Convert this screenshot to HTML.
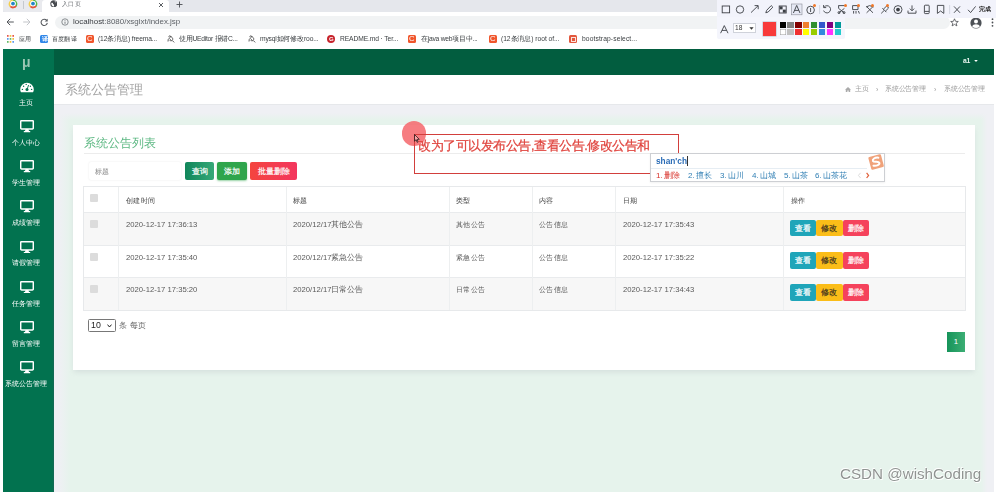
<!DOCTYPE html>
<html lang="zh">
<head>
<meta charset="utf-8">
<title>入口页</title>
<style>
*{box-sizing:border-box;margin:0;padding:0}
html,body{width:996px;height:492px;overflow:hidden;background:#fff}
body{position:relative;font-family:"Liberation Sans",sans-serif;color:#555;font-size:7.7px}
.abs{position:absolute}
.t{position:absolute;white-space:nowrap;line-height:1;will-change:transform}
/* ---------- browser chrome ---------- */
#tabstrip{left:0;top:0;width:996px;height:12px;background:#e5e7ec}
#pinned{left:3px;top:0;width:39px;height:12px;background:#e9eaee;border-radius:0 0 3px 3px}
#acttab{left:42px;top:0;width:127px;height:13px;background:#fff;border-radius:3px 3px 0 0}
#omni{left:55px;top:15.5px;width:895px;height:13px;background:#f1f3f4;border-radius:7px}
.bm{font-size:6.7px;color:#3c4043;top:35.5px}
.ico{position:absolute;top:35px;width:8px;height:8px;border-radius:1.5px}
/* ---------- app ---------- */
#topbar{left:3px;top:49px;width:991px;height:26px;background:#025d3f}
#sidebar{left:3px;top:49px;width:51px;height:443px;background:#02724f}
#header{left:54px;top:75px;width:940px;height:29px;background:#fff}
#content{left:54px;top:104px;width:940px;height:388px;overflow:hidden;border-top:1px solid #e6e8eb;background:linear-gradient(to right,#eff0f4 5px,rgba(239,240,244,0) 16px),linear-gradient(to left,#eff0f4 7px,rgba(239,240,244,0) 13px),linear-gradient(to bottom,#eff0f4 8px,rgba(239,240,244,0) 15px),#e6f3ec}
#inner{display:none}
#panel{left:73px;top:125px;width:902px;height:244.5px;background:#fff;box-shadow:0 3px 5px -1px rgba(150,155,170,.22)}
.side-l{font-size:7.1px;color:#fff;width:54px;left:-0.6px;text-align:center}
.mon{position:absolute;left:19.5px;width:14px;height:12.5px}
/* table */
#tbl{left:83px;top:185.9px;width:882.7px;height:125px;border:1px solid #e7e9eb;background:#fff}
.row{position:absolute;left:0;width:880.7px}
.vl{position:absolute;top:0;width:1px;height:123px;background:#edeff0}
.hl{position:absolute;left:0;width:880.7px;height:1px;background:#e9ebed}
.cb{position:absolute;left:90.1px;width:7.9px;height:8.4px;background:#dcdcdc;border-radius:1px}
.c{color:#5a5a5a;font-size:7.7px}
.h{color:#444;font-size:7.2px}
.btn{position:absolute;color:#fff;text-align:center;border-radius:2px;font-size:8px;padding-top:1px;-webkit-text-stroke:0.2px #fff}
.ab{position:absolute;width:26.3px;height:16.6px;line-height:17.8px;text-align:center;font-size:8px;border-radius:2px;overflow:hidden}
</style>
</head>
<body>
<!-- ================= browser chrome ================= -->
<div class="abs" id="tabstrip"></div>
<div class="abs" id="pinned"></div>
<div class="abs" style="left:0;top:0;width:3px;height:492px;background:#fff"></div>
<div class="abs" id="acttab"></div>
<div class="abs" id="omni"></div>


<!-- pinned tab icons -->
<svg class="abs" style="left:7.8px;top:-1.2px" width="10" height="10" viewBox="0 0 10 10"><path d="M5 5 L5 0.6 A4.4 4.4 0 0 0 2 8.2 Z" fill="#f5cf4c"/><path d="M5 5 L5 0.6 A4.4 4.4 0 0 1 8.6 7.4 Z" fill="#58b848"/><path d="M5 5 L8.8 7.2 A4.4 4.4 0 0 1 1.8 8 Z" fill="#e2553a"/><circle cx="5" cy="4.6" r="2.9" fill="#fff"/><circle cx="5" cy="4.6" r="1.9" fill="#2486c9"/></svg>
<div class="abs" style="left:23px;top:1px;width:1px;height:8px;background:#c6c9ce"></div>
<svg class="abs" style="left:27.6px;top:-1.2px" width="10" height="10" viewBox="0 0 10 10"><path d="M5 5 L5 0.6 A4.4 4.4 0 0 0 2 8.2 Z" fill="#f5cf4c"/><path d="M5 5 L5 0.6 A4.4 4.4 0 0 1 8.6 7.4 Z" fill="#58b848"/><path d="M5 5 L8.8 7.2 A4.4 4.4 0 0 1 1.8 8 Z" fill="#e2553a"/><circle cx="5" cy="4.6" r="2.9" fill="#fff"/><circle cx="5" cy="4.6" r="1.9" fill="#2486c9"/></svg>
<!-- active tab content -->
<svg class="abs" style="left:49.7px;top:-0.3px" width="7.6" height="7.6" viewBox="0 0 8 8"><circle cx="4" cy="4" r="3.7" fill="#484b50"/><path d="M1.4 3.2 C2.4 2.6 3.2 3 3.1 3.8 C3 4.6 4.2 4.6 4.3 5.4 C4.4 6.2 3.8 6.6 3.4 7 C2.2 6.6 1.2 5 1.4 3.2 Z" fill="#fff"/><path d="M4.8 1 C5.3 1.6 5.2 2.2 5.8 2.5 C6.3 2.7 6.8 2.5 7 3 C6.7 2 5.8 1.2 4.8 1 Z" fill="#fff"/></svg>
<div class="t" style="left:61.5px;top:1.2px;font-size:6.4px;color:#6a6d72;letter-spacing:0.266px">入口页</div>
<svg class="abs" style="left:157.5px;top:1.5px" width="6" height="6" viewBox="0 0 6 6"><path d="M1 1 L5 5 M5 1 L1 5" stroke="#4a4d52" stroke-width="0.9" fill="none"/></svg>
<svg class="abs" style="left:176px;top:0.5px" width="7" height="7" viewBox="0 0 7 7"><path d="M3.5 0.5 V6.5 M0.5 3.5 H6.5" stroke="#4a4d52" stroke-width="0.9" fill="none"/></svg>
<!-- nav buttons -->
<svg class="abs" style="left:6.2px;top:18px" width="8" height="8" viewBox="0 0 8 8"><path d="M7.8 4 H1 M4.2 0.8 L1 4 L4.2 7.2" stroke="#55585d" stroke-width="1" fill="none"/></svg>
<svg class="abs" style="left:22.5px;top:18px" width="8" height="8" viewBox="0 0 8 8"><path d="M0.2 4 H7 M3.8 0.8 L7 4 L3.8 7.2" stroke="#c3c5c9" stroke-width="1" fill="none"/></svg>
<svg class="abs" style="left:39.8px;top:17.8px" width="8.4" height="8.4" viewBox="0 0 8 8"><path d="M6.3 2.1 A3 3 0 1 0 7 4.7" stroke="#55585d" stroke-width="1" fill="none"/><path d="M7.3 0.6 V3.4 H4.5 Z" fill="#55585d"/></svg>
<svg class="abs" style="left:60.5px;top:18px" width="8" height="8" viewBox="0 0 8 8"><circle cx="4" cy="4" r="3.2" stroke="#5f6368" stroke-width="0.7" fill="none"/><path d="M4 3.6 V5.8 M4 2.2 V2.9" stroke="#5f6368" stroke-width="0.8"/></svg>
<div class="t" style="left:73.3px;top:18.2px;font-size:7.95px;color:#5f6368"><span style="color:#3a3d42">localhost</span>:8080/xsglxt/index.jsp</div>
<!-- bookmarks bar -->
<svg class="abs" style="left:7px;top:35px" width="7" height="8" viewBox="0 0 7 8"><g><rect x="0" y="0" width="1.6" height="1.8" fill="#e8574a"/><rect x="2.7" y="0" width="1.6" height="1.8" fill="#f2c13c"/><rect x="5.4" y="0" width="1.6" height="1.8" fill="#e8574a"/><rect x="0" y="3" width="1.6" height="1.8" fill="#5b9bf0"/><rect x="2.7" y="3" width="1.6" height="1.8" fill="#62b866"/><rect x="5.4" y="3" width="1.6" height="1.8" fill="#f2c13c"/><rect x="0" y="6" width="1.6" height="1.8" fill="#62b866"/><rect x="2.7" y="6" width="1.6" height="1.8" fill="#f2c13c"/><rect x="5.4" y="6" width="1.6" height="1.8" fill="#5b9bf0"/></g></svg>
<div class="t bm" style="left:18.8px;font-size:6.4px;letter-spacing:-0.051px">应用</div>
<div class="ico" style="left:40px;background:#2f86e8"></div><div class="t" style="left:41.8px;top:35.8px;font-size:6px;color:#fff;font-weight:bold">译</div>
<div class="t bm" style="left:52px;font-size:6.4px;letter-spacing:0.199px">百度翻译</div>
<div class="ico" style="left:86px;background:#f0562c"></div><div class="t" style="left:87.3px;top:35.2px;font-size:7.6px;color:#fff">C</div>
<div class="t bm" style="left:97.9px;letter-spacing:-0.126px">(12条消息) freema...</div>
<svg class="abs" style="left:167px;top:35px" width="8" height="8" viewBox="0 0 8 8"><path d="M1 6.5 C0.5 3 4 3 3.6 1.4 C3.2 0.2 1.4 1 2 2.2 M3.6 1.4 C6 2.4 6.6 5 4.2 5.8 C2.6 6.2 2.6 4.4 3.8 4.4 M5.2 5.4 L7.2 7.4" stroke="#333" stroke-width="0.8" fill="none"/></svg>
<div class="t bm" style="left:178.7px;letter-spacing:-0.254px">使用UEditor 报错C...</div>
<svg class="abs" style="left:247.5px;top:35px" width="8" height="8" viewBox="0 0 8 8"><path d="M1 6.5 C0.5 3 4 3 3.6 1.4 C3.2 0.2 1.4 1 2 2.2 M3.6 1.4 C6 2.4 6.6 5 4.2 5.8 C2.6 6.2 2.6 4.4 3.8 4.4 M5.2 5.4 L7.2 7.4" stroke="#333" stroke-width="0.8" fill="none"/></svg>
<div class="t bm" style="left:259.5px;letter-spacing:-0.161px">mysql如何修改roo...</div>
<div class="ico" style="left:327.3px;background:#c7232b;border-radius:4px"></div><div class="t" style="left:328.9px;top:36.2px;font-size:6px;color:#fff;font-weight:bold">G</div>
<div class="t bm" style="left:339.9px;letter-spacing:-0.104px">README.md · Ter...</div>
<div class="ico" style="left:408.1px;background:#f0562c"></div><div class="t" style="left:409.4px;top:35.2px;font-size:7.6px;color:#fff">C</div>
<div class="t bm" style="left:420.7px;letter-spacing:-0.232px">在java web项目中...</div>
<div class="ico" style="left:488.5px;background:#f0562c"></div><div class="t" style="left:489.8px;top:35.2px;font-size:7.6px;color:#fff">C</div>
<div class="t bm" style="left:501.3px;letter-spacing:-0.049px">(12条消息) root of...</div>
<div class="ico" style="left:569px;background:#e2573d"></div><div class="abs" style="left:570.5px;top:36.5px;width:5px;height:5px;border:0.8px solid #fbe3dc"></div>
<div class="t bm" style="left:581.6px;letter-spacing:0.108px">bootstrap-select...</div>
<!-- right side chrome icons -->
<svg class="abs" style="left:950px;top:18px" width="9" height="9" viewBox="0 0 9 9"><path d="M4.5 0.8 L5.6 3.3 L8.3 3.5 L6.2 5.2 L6.9 7.9 L4.5 6.4 L2.1 7.9 L2.8 5.2 L0.7 3.5 L3.4 3.3 Z" stroke="#4a4d52" stroke-width="0.8" fill="none"/></svg>
<svg class="abs" style="left:969.5px;top:16.5px" width="12" height="12" viewBox="0 0 12 12"><circle cx="6" cy="6" r="5.6" fill="#4d5156"/><circle cx="6" cy="4.4" r="2" fill="#fff"/><path d="M2.2 9.4 C2.8 6.6 9.2 6.6 9.8 9.4 A5.4 5.4 0 0 1 2.2 9.4 Z" fill="#fff"/></svg>
<svg class="abs" style="left:990.5px;top:18px" width="3" height="9" viewBox="0 0 3 9"><circle cx="1.5" cy="1.2" r="0.9" fill="#4a4d52"/><circle cx="1.5" cy="4.5" r="0.9" fill="#4a4d52"/><circle cx="1.5" cy="7.8" r="0.9" fill="#4a4d52"/></svg>


<!-- screenshot toolbar -->
<div class="abs" style="left:716.5px;top:0;width:280px;height:17.5px;background:#f2f3fb"></div>
<div class="abs" style="left:716.5px;top:17px;width:128px;height:21.5px;background:#f4f5fc;border-radius:0 0 2px 2px"></div>
<svg class="abs" style="left:716px;top:0" width="280" height="18" viewBox="0 0 280 18">
 <rect x="6.2" y="6" width="7.4" height="6.8" stroke="#3c3f45" stroke-width="0.9" fill="none"/>
 <circle cx="24" cy="9.5" r="3.7" stroke="#3c3f45" stroke-width="0.9" fill="none"/>
 <path d="M35 12.6 L42 5.8 M38.6 5.6 H42.2 V9.2" stroke="#3c3f45" stroke-width="0.9" fill="none"/>
 <path d="M49.8 12.8 L50.6 10.4 L55.2 5.6 L56.8 7.2 L52.2 12 Z" stroke="#3c3f45" stroke-width="0.9" fill="none"/>
 <rect x="63.2" y="6" width="7" height="7" stroke="#3c3f45" stroke-width="0.9" fill="none"/><rect x="63.6" y="6.4" width="3" height="3" fill="#3c3f45"/><rect x="66.8" y="9.6" width="3" height="3" fill="#3c3f45"/>
 <rect x="75.4" y="4" width="10.6" height="10.8" fill="#e6e8f4" stroke="#8a8d96" stroke-width="0.6"/>
 <path d="M77.4 13 L80.7 5.4 L84 13 M78.6 10.4 H82.8" stroke="#3c3f45" stroke-width="0.9" fill="none"/>
 <circle cx="94.6" cy="10" r="3.8" stroke="#3c3f45" stroke-width="0.9" fill="none"/><path d="M94.6 8 V12" stroke="#3c3f45" stroke-width="0.9" fill="none"/>
 <path d="M103.6 5 V14" stroke="#c9cbd6" stroke-width="0.7"/>
 <path d="M108.2 7 A3.6 3.6 0 1 1 107.6 10.6 M107.6 5 V7.6 H110.2" stroke="#3c3f45" stroke-width="0.9" fill="none"/>
 <path d="M122.4 5.6 H128.6 M122.6 5.6 V8.4 M128.4 8.4 L122.6 13 M122.6 8.4 L128.4 13" stroke="#3c3f45" stroke-width="0.9" fill="none"/><circle cx="123" cy="12.6" r="1" stroke="#3c3f45" stroke-width="0.9" fill="none"/><circle cx="128" cy="12.6" r="1" stroke="#3c3f45" stroke-width="0.9" fill="none"/>
 <path d="M136.6 5.6 H142 V9.6 H136.6 Z M137.6 11 V13.6 M140 11 V13.6 M142.4 11 L143.4 13.6" stroke="#3c3f45" stroke-width="0.9" fill="none"/>
 <path d="M150.6 6.6 L157 12.8 M157 6.6 L150.6 12.8 M150 7 L153.6 5.6 L157.6 7" stroke="#3c3f45" stroke-width="0.9" fill="none"/>
 <path d="M165.2 13.4 L168 10.6 M166.4 8.2 L170.4 12.2 M167.4 9.2 L170.6 6 L172.6 8 L169.4 11.2" stroke="#3c3f45" stroke-width="0.9" fill="none"/>
 <circle cx="182" cy="9.6" r="4" stroke="#3c3f45" stroke-width="0.9" fill="none"/><circle cx="182" cy="9.6" r="1.9" fill="#3c3f45"/>
 <path d="M196 5.4 V10.6 M193.8 8.6 L196 10.8 L198.2 8.6 M192 10.6 V13.2 H200 V10.6" stroke="#3c3f45" stroke-width="0.9" fill="none"/>
 <rect x="208.4" y="5.2" width="4.8" height="8.4" rx="0.8" stroke="#3c3f45" stroke-width="0.9" fill="none"/><path d="M208.4 11.4 H213.2" stroke="#3c3f45" stroke-width="0.9" fill="none"/>
 <path d="M221.4 5.4 H227.8 V13.4 L224.6 11 L221.4 13.4 Z" stroke="#3c3f45" stroke-width="0.9" fill="none"/>
 <path d="M233.6 5 V14" stroke="#c9cbd6" stroke-width="0.7"/>
 <path d="M238 6.4 L244 12.8 M244 6.4 L238 12.8" stroke="#3c3f45" stroke-width="0.9" fill="none"/>
 <path d="M252 9.8 L254.6 12.6 L259.6 6.4" stroke="#3c3f45" stroke-width="0.9" fill="none"/>
</svg>
<div class="abs" style="left:812.5px;top:3.5px;width:3px;height:3px;border-radius:2px;background:#f0782a"></div><div class="abs" style="left:843.5px;top:3.5px;width:3px;height:3px;border-radius:2px;background:#f0782a"></div><div class="abs" style="left:857px;top:3.5px;width:3px;height:3px;border-radius:2px;background:#f0782a"></div><div class="abs" style="left:871px;top:3.5px;width:3px;height:3px;border-radius:2px;background:#f0782a"></div><div class="abs" style="left:886px;top:3.5px;width:3px;height:3px;border-radius:2px;background:#f0782a"></div>
<div class="t" style="left:978.5px;top:6.4px;font-size:6.4px;color:#222;font-weight:bold;letter-spacing:0.196px">完成</div>
<svg class="abs" style="left:720px;top:24.5px" width="9" height="9" viewBox="0 0 9 9"><path d="M0.6 8.2 L4.3 0.6 L8 8.2 M2 5.4 H6.6" stroke="#3c3f45" stroke-width="0.9" fill="none"/></svg>
<div class="abs" style="left:732.5px;top:23.3px;width:23.5px;height:10px;background:#fff;border:0.6px solid #cfd2da"></div>
<div class="t" style="left:735px;top:25.2px;font-size:6.6px;color:#333">18</div>
<svg class="abs" style="left:748.5px;top:27px" width="5" height="3" viewBox="0 0 5 3"><path d="M0.4 0.3 H4.6 L2.5 2.8 Z" fill="#333"/></svg>
<div class="abs" style="left:763.3px;top:21.6px;width:13.2px;height:14px;background:#f83a3a;box-shadow:0 0 0 0.5px #b9bcc6"></div>
<div class="abs" style="left:779.60px;top:21.8px;width:6.3px;height:5.8px;background:#000000"></div><div class="abs" style="left:787.45px;top:21.8px;width:6.3px;height:5.8px;background:#808080"></div><div class="abs" style="left:795.30px;top:21.8px;width:6.3px;height:5.8px;background:#800000"></div><div class="abs" style="left:803.15px;top:21.8px;width:6.3px;height:5.8px;background:#f08030"></div><div class="abs" style="left:811.00px;top:21.8px;width:6.3px;height:5.8px;background:#2f8f2f"></div><div class="abs" style="left:818.85px;top:21.8px;width:6.3px;height:5.8px;background:#3355cc"></div><div class="abs" style="left:826.70px;top:21.8px;width:6.3px;height:5.8px;background:#800080"></div><div class="abs" style="left:834.55px;top:21.8px;width:6.3px;height:5.8px;background:#009999"></div><div class="abs" style="left:779.60px;top:29.4px;width:6.3px;height:6px;background:#ffffff;box-shadow:inset 0 0 0 0.5px #999"></div><div class="abs" style="left:787.45px;top:29.4px;width:6.3px;height:6px;background:#c0c0c0"></div><div class="abs" style="left:795.30px;top:29.4px;width:6.3px;height:6px;background:#f03030"></div><div class="abs" style="left:803.15px;top:29.4px;width:6.3px;height:6px;background:#ffff00"></div><div class="abs" style="left:811.00px;top:29.4px;width:6.3px;height:6px;background:#99cc00"></div><div class="abs" style="left:818.85px;top:29.4px;width:6.3px;height:6px;background:#3388dd"></div><div class="abs" style="left:826.70px;top:29.4px;width:6.3px;height:6px;background:#ff33ff"></div><div class="abs" style="left:834.55px;top:29.4px;width:6.3px;height:6px;background:#22cccc"></div>

<!-- ================= app ================= -->
<div class="abs" id="topbar"></div>
<div class="abs" id="sidebar"></div>
<div class="abs" style="left:52px;top:75px;width:2px;height:417px;background:linear-gradient(to right,rgba(40,90,90,0),rgba(50,90,95,.45))"></div>
<div class="abs" id="header"></div>
<div class="abs" id="content"><div class="abs" id="inner"></div></div>
<div class="abs" id="panel"></div>
<!-- sidebar/topbar/header content -->
<div class="t" style="left:21.6px;top:54.6px;font-size:14px;font-weight:bold;color:#9cc7b4">μ</div>
<svg class="abs" style="left:19.5px;top:81px" width="14" height="11.5" viewBox="0 0 14 11.5"><path d="M0.2 8.6 A6.8 6.8 0 0 1 13.8 8.6 Q13.8 10.2 13 11.3 H1 Q0.2 10.2 0.2 8.6 Z" fill="#fff"/><circle cx="7" cy="8.6" r="1.5" fill="#02724f"/><path d="M7 8.6 L8.6 4" stroke="#02724f" stroke-width="0.9"/><circle cx="2.4" cy="8.4" r="0.7" fill="#02724f"/><circle cx="3.6" cy="5.2" r="0.7" fill="#02724f"/><circle cx="6.2" cy="3.4" r="0.7" fill="#02724f"/><circle cx="10.4" cy="5.2" r="0.7" fill="#02724f"/><circle cx="11.6" cy="8.4" r="0.7" fill="#02724f"/></svg>
<div class="t side-l" style="top:99.5px">主页</div>
<div class="t side-l" style="top:139.7px">个人中心</div>
<svg class="mon" style="top:120.0px" viewBox="0 0 14 12.5"><rect x="0.7" y="0.7" width="12.6" height="8.2" rx="0.9" fill="none" stroke="#fff" stroke-width="1.5"/><path d="M5.6 9 L5 11 H3.8 V12.2 H10.2 V11 H9 L8.4 9 Z" fill="#fff"/></svg>
<div class="t side-l" style="top:179.9px">学生管理</div>
<svg class="mon" style="top:160.2px" viewBox="0 0 14 12.5"><rect x="0.7" y="0.7" width="12.6" height="8.2" rx="0.9" fill="none" stroke="#fff" stroke-width="1.5"/><path d="M5.6 9 L5 11 H3.8 V12.2 H10.2 V11 H9 L8.4 9 Z" fill="#fff"/></svg>
<div class="t side-l" style="top:220.1px">成绩管理</div>
<svg class="mon" style="top:200.4px" viewBox="0 0 14 12.5"><rect x="0.7" y="0.7" width="12.6" height="8.2" rx="0.9" fill="none" stroke="#fff" stroke-width="1.5"/><path d="M5.6 9 L5 11 H3.8 V12.2 H10.2 V11 H9 L8.4 9 Z" fill="#fff"/></svg>
<div class="t side-l" style="top:260.3px">请假管理</div>
<svg class="mon" style="top:240.6px" viewBox="0 0 14 12.5"><rect x="0.7" y="0.7" width="12.6" height="8.2" rx="0.9" fill="none" stroke="#fff" stroke-width="1.5"/><path d="M5.6 9 L5 11 H3.8 V12.2 H10.2 V11 H9 L8.4 9 Z" fill="#fff"/></svg>
<div class="t side-l" style="top:300.5px">任务管理</div>
<svg class="mon" style="top:280.8px" viewBox="0 0 14 12.5"><rect x="0.7" y="0.7" width="12.6" height="8.2" rx="0.9" fill="none" stroke="#fff" stroke-width="1.5"/><path d="M5.6 9 L5 11 H3.8 V12.2 H10.2 V11 H9 L8.4 9 Z" fill="#fff"/></svg>
<div class="t side-l" style="top:340.7px">留言管理</div>
<svg class="mon" style="top:321.0px" viewBox="0 0 14 12.5"><rect x="0.7" y="0.7" width="12.6" height="8.2" rx="0.9" fill="none" stroke="#fff" stroke-width="1.5"/><path d="M5.6 9 L5 11 H3.8 V12.2 H10.2 V11 H9 L8.4 9 Z" fill="#fff"/></svg>
<div class="t side-l" style="top:380.9px">系统公告管理</div>
<svg class="mon" style="top:361.2px" viewBox="0 0 14 12.5"><rect x="0.7" y="0.7" width="12.6" height="8.2" rx="0.9" fill="none" stroke="#fff" stroke-width="1.5"/><path d="M5.6 9 L5 11 H3.8 V12.2 H10.2 V11 H9 L8.4 9 Z" fill="#fff"/></svg>
<div class="t" style="left:963.1px;top:57.5px;font-size:6.8px;color:#e8f5ef;font-weight:bold;letter-spacing:-0.2px">a1</div>
<svg class="abs" style="left:974.4px;top:59.8px" width="4" height="2" viewBox="0 0 4 2"><path d="M0.2 0.1 H3.8 L2 1.9 Z" fill="#fff"/></svg>
<div class="t" style="left:64.8px;top:83.2px;font-size:13.2px;color:#a3a3a3">系统公告管理</div>
<svg class="abs" style="left:844.5px;top:86.5px" width="6" height="5.5" viewBox="0 0 6 5.5"><path d="M0 2.8 L3 0 L6 2.8 H5.2 V5.5 H3.6 V3.6 H2.4 V5.5 H0.8 V2.8 Z" fill="#aaa"/></svg>
<div class="t" style="left:855px;top:86px;font-size:6.8px;color:#9c9c9c;letter-spacing:-0.2px">主页</div>
<div class="t" style="left:875.5px;top:85.6px;font-size:7px;color:#9c9c9c">›</div>
<div class="t" style="left:885px;top:86px;font-size:6.8px;color:#9c9c9c;letter-spacing:-0.2px">系统公告管理</div>
<div class="t" style="left:933.5px;top:85.6px;font-size:7px;color:#9c9c9c">›</div>
<div class="t" style="left:943.6px;top:86px;font-size:6.8px;color:#9c9c9c;letter-spacing:-0.2px">系统公告管理</div>
<!-- panel content -->
<div class="t" style="left:83.5px;top:136.6px;font-size:12px;color:#5db883">系统公告列表</div>
<div class="abs" style="left:83.5px;top:153.2px;width:881px;height:1px;background:#ececec"></div>
<div class="abs" style="left:88.5px;top:161.8px;width:92.5px;height:18.4px;background:#fff;border-radius:2px;box-shadow:0 0 2px rgba(0,0,0,.10)"></div>
<div class="t" style="left:95.3px;top:168.8px;font-size:6.8px;color:#888">标题</div>
<div class="btn" style="left:185px;top:162px;width:29.2px;height:18px;line-height:18px;background:linear-gradient(90deg,#10865a,#36a878)">查询</div>
<div class="btn" style="left:217px;top:161.8px;width:30px;height:18.4px;line-height:18.4px;background:#2fa54c;box-shadow:0 1px 2px rgba(47,165,76,.5)">添加</div>
<div class="btn" style="left:250px;top:162px;width:47px;height:18px;line-height:18px;background:linear-gradient(90deg,#f4453f,#f3365e)">批量删除</div>
<div class="abs" id="tbl">
 <div class="row" style="top:25.3px;height:33.3px;background:#f7f7f7"></div>
 <div class="row" style="top:90.5px;height:32.5px;background:#f7f7f7"></div>
 <div class="hl" style="top:24.8px"></div><div class="hl" style="top:58.1px"></div><div class="hl" style="top:90px"></div>
 <div class="vl" style="left:33.9px"></div><div class="vl" style="left:201.8px"></div><div class="vl" style="left:365.4px"></div><div class="vl" style="left:448.2px"></div><div class="vl" style="left:530.9px"></div><div class="vl" style="left:698.8px"></div>
</div>
<div class="cb" style="top:193.9px"></div><div class="cb" style="top:220.1px"></div><div class="cb" style="top:253.0px"></div><div class="cb" style="top:284.9px"></div>
<div class="t h" style="left:125.5px;top:197px;letter-spacing:0.325px">创建时间</div><div class="t h" style="left:293px;top:197px">标题</div><div class="t h" style="left:456.3px;top:197px;letter-spacing:0.296px">类型</div><div class="t h" style="left:539.4px;top:197px;letter-spacing:0.296px">内容</div><div class="t h" style="left:622.9px;top:197px;letter-spacing:0.296px">日期</div><div class="t h" style="left:790.7px;top:197px;letter-spacing:0.296px">操作</div>
<div class="t c" style="left:125.5px;top:221.1px">2020-12-17 17:36:13</div><div class="t c" style="left:292.6px;top:221.1px">2020/12/17其他公告</div><div class="t c" style="left:456px;top:221.1px;font-size:7.3px;letter-spacing:0.325px">其他公告</div><div class="t c" style="left:538.8px;top:221.1px;font-size:7.3px;letter-spacing:0.400px">公告信息</div><div class="t c" style="left:622.5px;top:221.1px">2020-12-17 17:35:43</div>
<div class="t c" style="left:125.5px;top:253.5px">2020-12-17 17:35:40</div><div class="t c" style="left:292.6px;top:253.5px">2020/12/17紧急公告</div><div class="t c" style="left:456px;top:253.5px;font-size:7.3px;letter-spacing:0.325px">紧急公告</div><div class="t c" style="left:538.8px;top:253.5px;font-size:7.3px;letter-spacing:0.400px">公告信息</div><div class="t c" style="left:622.5px;top:253.5px">2020-12-17 17:35:22</div>
<div class="t c" style="left:125.5px;top:285.9px">2020-12-17 17:35:20</div><div class="t c" style="left:292.6px;top:285.9px">2020/12/17日常公告</div><div class="t c" style="left:456px;top:285.9px;font-size:7.3px;letter-spacing:0.325px">日常公告</div><div class="t c" style="left:538.8px;top:285.9px;font-size:7.3px;letter-spacing:0.400px">公告信息</div><div class="t c" style="left:622.5px;top:285.9px">2020-12-17 17:34:43</div>
<div class="ab" style="left:790px;top:219.9px;background:#1fa5b9;color:#fff;-webkit-text-stroke:0.2px #fff">查看</div><div class="ab" style="left:816.3px;top:219.9px;background:#fbbd18;color:#3a3020;-webkit-text-stroke:0.2px #3a3020">修改</div><div class="ab" style="left:842.6px;top:219.9px;background:#f5425c;color:#fff;-webkit-text-stroke:0.2px #fff">删除</div>
<div class="ab" style="left:790px;top:252.1px;background:#1fa5b9;color:#fff;-webkit-text-stroke:0.2px #fff">查看</div><div class="ab" style="left:816.3px;top:252.1px;background:#fbbd18;color:#3a3020;-webkit-text-stroke:0.2px #3a3020">修改</div><div class="ab" style="left:842.6px;top:252.1px;background:#f5425c;color:#fff;-webkit-text-stroke:0.2px #fff">删除</div>
<div class="ab" style="left:790px;top:284.1px;background:#1fa5b9;color:#fff;-webkit-text-stroke:0.2px #fff">查看</div><div class="ab" style="left:816.3px;top:284.1px;background:#fbbd18;color:#3a3020;-webkit-text-stroke:0.2px #3a3020">修改</div><div class="ab" style="left:842.6px;top:284.1px;background:#f5425c;color:#fff;-webkit-text-stroke:0.2px #fff">删除</div>
<div class="abs" style="left:88px;top:318.8px;width:27.8px;height:12.8px;background:#fff;border:0.8px solid #777;border-radius:1.5px"></div>
<div class="t" style="left:91px;top:321.2px;font-size:8.8px;color:#222">10</div>
<svg class="abs" style="left:107px;top:323.5px" width="5" height="4" viewBox="0 0 5 4"><path d="M0.5 0.6 L2.5 3 L4.5 0.6" stroke="#222" stroke-width="1" fill="none"/></svg>
<div class="t" style="left:118.8px;top:321.8px;font-size:7.6px;color:#666;letter-spacing:0.344px">条 每页</div>
<div class="abs" style="left:947.2px;top:332px;width:17.6px;height:19.5px;background:linear-gradient(90deg,#16945a,#3cae74);color:#fff;font-size:7.8px;text-align:center;line-height:19.5px">1</div>
<!-- annotation -->
<div class="abs" style="left:401.9px;top:121.4px;width:24.3px;height:24.3px;border-radius:50%;background:rgba(244,104,108,.86)"></div>
<div class="abs" style="left:414.1px;top:133.6px;width:264.9px;height:40.2px;border:1.2px solid #d23f3c"></div>
<svg class="abs" style="left:414.4px;top:134px" width="6" height="9" viewBox="0 0 6 9"><path d="M0.5 0.5 V7.2 L2.1 5.7 L3.2 8.3 L4.2 7.9 L3.1 5.4 L5.3 5.3 Z" fill="rgba(255,255,255,.3)" stroke="#2a1a1a" stroke-width="0.8"/></svg>
<div class="t" style="left:417.6px;top:140.3px;font-size:12.6px;color:#e0453f;-webkit-text-stroke:0.25px #e0453f;letter-spacing:-0.450px">改为了可以发布公告,查看公告.修改公告和</div>
<!-- IME popup -->
<div class="abs" style="left:649.8px;top:153.4px;width:235.4px;height:28.8px;background:#fff;border:1px solid #cdcfd3;box-shadow:0 1px 2px rgba(0,0,0,.06)"></div>
<div class="abs" style="left:651px;top:168px;width:216px;height:0.8px;background:#e6edf3"></div>
<div class="t" style="left:655.6px;top:157.2px;font-size:8.3px;font-weight:bold;color:#2a6cb6">shan'ch</div>
<div class="abs" style="left:686.6px;top:156.2px;width:0.8px;height:10px;background:#333"></div>
<div class="t" style="left:656px;top:171.6px;font-size:8px;color:#d8322b">1.<span style="margin-left:1px">删除</span></div>
<div class="t" style="left:688.2px;top:171.6px;font-size:8px;color:#2f7eb3">2.<span style="margin-left:1.4px">擅长</span></div>
<div class="t" style="left:719.6px;top:171.6px;font-size:8px;color:#2f7eb3">3.<span style="margin-left:1.4px">山川</span></div>
<div class="t" style="left:751.6px;top:171.6px;font-size:8px;color:#2f7eb3">4.<span style="margin-left:1.4px">山城</span></div>
<div class="t" style="left:783.5px;top:171.6px;font-size:8px;color:#2f7eb3">5.<span style="margin-left:1.4px">山茶</span></div>
<div class="t" style="left:815.4px;top:171.6px;font-size:8px;color:#2f7eb3">6.<span style="margin-left:1.4px">山茶花</span></div>
<svg class="abs" style="left:856.5px;top:172px" width="14" height="7" viewBox="0 0 14 7"><path d="M3.6 0.8 L1.4 3.4 L3.6 6" stroke="#cfcfcf" stroke-width="0.7" fill="none"/><path d="M9.6 0.8 L11.6 3.4 L9.6 6" stroke="#e0603a" stroke-width="1.2" fill="none"/></svg>
<svg class="abs" style="left:866px;top:151.5px" width="20" height="20" viewBox="0 0 20 20"><g transform="rotate(-15 10 10)"><rect x="3.6" y="3.4" width="13" height="13.2" rx="1.2" fill="#f0a27a"/><path d="M13.4 6.4 C10 5.2 7 6.2 7.3 8.3 C7.7 10.3 12.9 9.5 13 11.7 C13.1 13.7 9.6 14.1 6.6 12.9" stroke="#fff" stroke-width="2" fill="none" stroke-linecap="round"/></g></svg>
<!-- watermark -->
<div class="t" style="left:840px;top:465.6px;font-size:15.2px;color:#8f9391;text-shadow:0 0 1px #fff,0.6px 0.6px 0 #fff,-0.6px -0.6px 0 #fff">CSDN @wishCoding</div>
</body>
</html>
